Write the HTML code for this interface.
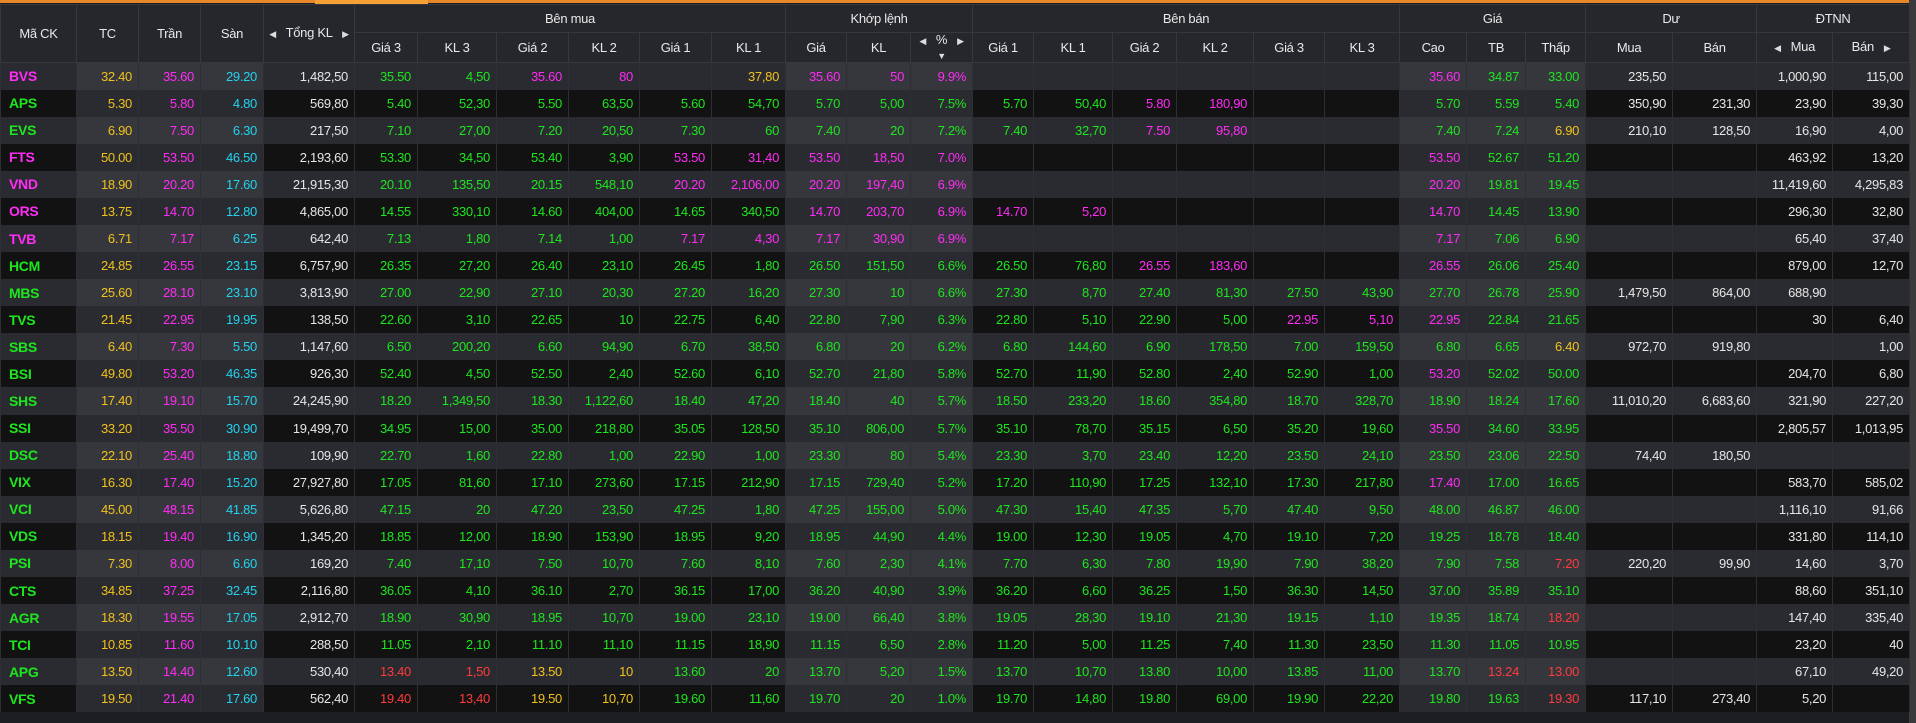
<!DOCTYPE html>
<html><head><meta charset="utf-8">
<style>
html,body{margin:0;padding:0;background:#1d1e22;width:1916px;height:723px;overflow:hidden;font-family:"Liberation Sans",Arial,sans-serif;}
.top{position:absolute;left:0;top:0;width:1909px;height:3px;background:#e8862a;}
.top2{position:absolute;left:315px;top:0;width:113px;height:5px;background:#f5a033;}
.sb{position:absolute;left:1909px;top:0;width:7px;height:723px;background:#3a3a3c;}
table{position:absolute;left:0;top:4px;border-collapse:collapse;table-layout:fixed;width:1909px;font-size:13px;letter-spacing:-0.3px;}
th{background:#26272c;color:#e8e8e8;font-weight:normal;border:1px solid #37383d;height:26px;padding:0;text-align:center;line-height:14px;}
tr.h1 th{height:27px;}
td{height:27.08px;padding:0 6px 0 0;text-align:right;border-left:1px solid #2e2f34;border-right:1px solid #2e2f34;color:#e6e6e6;white-space:nowrap;overflow:hidden;box-sizing:border-box;}
td.s{text-align:left;padding-left:8px;font-weight:bold;font-size:14px;}
tr.o td{background:#2a2b30;}
tr.o td.hl{background:#36373d;}
tr.e td{background:#121212;}
tr.e td.hl{background:#2a2b30;}
.ar{font-size:9px;color:#ddd;}
</style></head><body>
<div class="top"></div><div class="top2"></div><div class="sb"></div>
<table id="t">
<colgroup><col style="width:76px"><col style="width:62px"><col style="width:62px"><col style="width:63px"><col style="width:91px"><col style="width:63px"><col style="width:79px"><col style="width:72px"><col style="width:71px"><col style="width:72px"><col style="width:74px"><col style="width:61px"><col style="width:64px"><col style="width:62px"><col style="width:61px"><col style="width:79px"><col style="width:64px"><col style="width:77px"><col style="width:71px"><col style="width:75px"><col style="width:67px"><col style="width:59px"><col style="width:60px"><col style="width:87px"><col style="width:84px"><col style="width:76px"><col style="width:77px"></colgroup>
<thead>
<tr class="h1"><th rowspan="2">Mã CK</th><th rowspan="2">TC</th><th rowspan="2">Trần</th><th rowspan="2">Sàn</th><th rowspan="2"><span class="ar">◀</span>&nbsp;&nbsp; Tổng KL &nbsp;&nbsp;<span class="ar">▶</span></th><th colspan="6">Bên mua</th><th colspan="3">Khớp lệnh</th><th colspan="6">Bên bán</th><th colspan="3">Giá</th><th colspan="2">Dư</th><th colspan="2">ĐTNN</th></tr>
<tr><th>Giá 3</th><th>KL 3</th><th>Giá 2</th><th>KL 2</th><th>Giá 1</th><th>KL 1</th><th>Giá</th><th>KL</th><th><span class="ar">◀</span>&nbsp;&nbsp; % &nbsp;&nbsp;<span class="ar">▶</span><br><span class="ar" style="line-height:6px">▼</span></th><th>Giá 1</th><th>KL 1</th><th>Giá 2</th><th>KL 2</th><th>Giá 3</th><th>KL 3</th><th>Cao</th><th>TB</th><th>Thấp</th><th>Mua</th><th>Bán</th><th><span class="ar">◀</span>&nbsp;&nbsp; Mua</th><th>Bán &nbsp;&nbsp;<span class="ar">▶</span></th></tr>
</thead>
<tbody>
<tr><td>BVS</td><td>32.40</td><td>35.60</td><td>29.20</td><td>1,482,50</td><td>35.50</td><td>4,50</td><td>35.60</td><td>80</td><td></td><td>37,80</td><td>35.60</td><td>50</td><td>9.9%</td><td></td><td></td><td></td><td></td><td></td><td></td><td>35.60</td><td>34.87</td><td>33.00</td><td>235,50</td><td></td><td>1,000,90</td><td>115,00</td></tr>
<tr><td>APS</td><td>5.30</td><td>5.80</td><td>4.80</td><td>569,80</td><td>5.40</td><td>52,30</td><td>5.50</td><td>63,50</td><td>5.60</td><td>54,70</td><td>5.70</td><td>5,00</td><td>7.5%</td><td>5.70</td><td>50,40</td><td>5.80</td><td>180,90</td><td></td><td></td><td>5.70</td><td>5.59</td><td>5.40</td><td>350,90</td><td>231,30</td><td>23,90</td><td>39,30</td></tr>
<tr><td>EVS</td><td>6.90</td><td>7.50</td><td>6.30</td><td>217,50</td><td>7.10</td><td>27,00</td><td>7.20</td><td>20,50</td><td>7.30</td><td>60</td><td>7.40</td><td>20</td><td>7.2%</td><td>7.40</td><td>32,70</td><td>7.50</td><td>95,80</td><td></td><td></td><td>7.40</td><td>7.24</td><td>6.90</td><td>210,10</td><td>128,50</td><td>16,90</td><td>4,00</td></tr>
<tr><td>FTS</td><td>50.00</td><td>53.50</td><td>46.50</td><td>2,193,60</td><td>53.30</td><td>34,50</td><td>53.40</td><td>3,90</td><td>53.50</td><td>31,40</td><td>53.50</td><td>18,50</td><td>7.0%</td><td></td><td></td><td></td><td></td><td></td><td></td><td>53.50</td><td>52.67</td><td>51.20</td><td></td><td></td><td>463,92</td><td>13,20</td></tr>
<tr><td>VND</td><td>18.90</td><td>20.20</td><td>17.60</td><td>21,915,30</td><td>20.10</td><td>135,50</td><td>20.15</td><td>548,10</td><td>20.20</td><td>2,106,00</td><td>20.20</td><td>197,40</td><td>6.9%</td><td></td><td></td><td></td><td></td><td></td><td></td><td>20.20</td><td>19.81</td><td>19.45</td><td></td><td></td><td>11,419,60</td><td>4,295,83</td></tr>
<tr><td>ORS</td><td>13.75</td><td>14.70</td><td>12.80</td><td>4,865,00</td><td>14.55</td><td>330,10</td><td>14.60</td><td>404,00</td><td>14.65</td><td>340,50</td><td>14.70</td><td>203,70</td><td>6.9%</td><td>14.70</td><td>5,20</td><td></td><td></td><td></td><td></td><td>14.70</td><td>14.45</td><td>13.90</td><td></td><td></td><td>296,30</td><td>32,80</td></tr>
<tr><td>TVB</td><td>6.71</td><td>7.17</td><td>6.25</td><td>642,40</td><td>7.13</td><td>1,80</td><td>7.14</td><td>1,00</td><td>7.17</td><td>4,30</td><td>7.17</td><td>30,90</td><td>6.9%</td><td></td><td></td><td></td><td></td><td></td><td></td><td>7.17</td><td>7.06</td><td>6.90</td><td></td><td></td><td>65,40</td><td>37,40</td></tr>
<tr><td>HCM</td><td>24.85</td><td>26.55</td><td>23.15</td><td>6,757,90</td><td>26.35</td><td>27,20</td><td>26.40</td><td>23,10</td><td>26.45</td><td>1,80</td><td>26.50</td><td>151,50</td><td>6.6%</td><td>26.50</td><td>76,80</td><td>26.55</td><td>183,60</td><td></td><td></td><td>26.55</td><td>26.06</td><td>25.40</td><td></td><td></td><td>879,00</td><td>12,70</td></tr>
<tr><td>MBS</td><td>25.60</td><td>28.10</td><td>23.10</td><td>3,813,90</td><td>27.00</td><td>22,90</td><td>27.10</td><td>20,30</td><td>27.20</td><td>16,20</td><td>27.30</td><td>10</td><td>6.6%</td><td>27.30</td><td>8,70</td><td>27.40</td><td>81,30</td><td>27.50</td><td>43,90</td><td>27.70</td><td>26.78</td><td>25.90</td><td>1,479,50</td><td>864,00</td><td>688,90</td><td></td></tr>
<tr><td>TVS</td><td>21.45</td><td>22.95</td><td>19.95</td><td>138,50</td><td>22.60</td><td>3,10</td><td>22.65</td><td>10</td><td>22.75</td><td>6,40</td><td>22.80</td><td>7,90</td><td>6.3%</td><td>22.80</td><td>5,10</td><td>22.90</td><td>5,00</td><td>22.95</td><td>5,10</td><td>22.95</td><td>22.84</td><td>21.65</td><td></td><td></td><td>30</td><td>6,40</td></tr>
<tr><td>SBS</td><td>6.40</td><td>7.30</td><td>5.50</td><td>1,147,60</td><td>6.50</td><td>200,20</td><td>6.60</td><td>94,90</td><td>6.70</td><td>38,50</td><td>6.80</td><td>20</td><td>6.2%</td><td>6.80</td><td>144,60</td><td>6.90</td><td>178,50</td><td>7.00</td><td>159,50</td><td>6.80</td><td>6.65</td><td>6.40</td><td>972,70</td><td>919,80</td><td></td><td>1,00</td></tr>
<tr><td>BSI</td><td>49.80</td><td>53.20</td><td>46.35</td><td>926,30</td><td>52.40</td><td>4,50</td><td>52.50</td><td>2,40</td><td>52.60</td><td>6,10</td><td>52.70</td><td>21,80</td><td>5.8%</td><td>52.70</td><td>11,90</td><td>52.80</td><td>2,40</td><td>52.90</td><td>1,00</td><td>53.20</td><td>52.02</td><td>50.00</td><td></td><td></td><td>204,70</td><td>6,80</td></tr>
<tr><td>SHS</td><td>17.40</td><td>19.10</td><td>15.70</td><td>24,245,90</td><td>18.20</td><td>1,349,50</td><td>18.30</td><td>1,122,60</td><td>18.40</td><td>47,20</td><td>18.40</td><td>40</td><td>5.7%</td><td>18.50</td><td>233,20</td><td>18.60</td><td>354,80</td><td>18.70</td><td>328,70</td><td>18.90</td><td>18.24</td><td>17.60</td><td>11,010,20</td><td>6,683,60</td><td>321,90</td><td>227,20</td></tr>
<tr><td>SSI</td><td>33.20</td><td>35.50</td><td>30.90</td><td>19,499,70</td><td>34.95</td><td>15,00</td><td>35.00</td><td>218,80</td><td>35.05</td><td>128,50</td><td>35.10</td><td>806,00</td><td>5.7%</td><td>35.10</td><td>78,70</td><td>35.15</td><td>6,50</td><td>35.20</td><td>19,60</td><td>35.50</td><td>34.60</td><td>33.95</td><td></td><td></td><td>2,805,57</td><td>1,013,95</td></tr>
<tr><td>DSC</td><td>22.10</td><td>25.40</td><td>18.80</td><td>109,90</td><td>22.70</td><td>1,60</td><td>22.80</td><td>1,00</td><td>22.90</td><td>1,00</td><td>23.30</td><td>80</td><td>5.4%</td><td>23.30</td><td>3,70</td><td>23.40</td><td>12,20</td><td>23.50</td><td>24,10</td><td>23.50</td><td>23.06</td><td>22.50</td><td>74,40</td><td>180,50</td><td></td><td></td></tr>
<tr><td>VIX</td><td>16.30</td><td>17.40</td><td>15.20</td><td>27,927,80</td><td>17.05</td><td>81,60</td><td>17.10</td><td>273,60</td><td>17.15</td><td>212,90</td><td>17.15</td><td>729,40</td><td>5.2%</td><td>17.20</td><td>110,90</td><td>17.25</td><td>132,10</td><td>17.30</td><td>217,80</td><td>17.40</td><td>17.00</td><td>16.65</td><td></td><td></td><td>583,70</td><td>585,02</td></tr>
<tr><td>VCI</td><td>45.00</td><td>48.15</td><td>41.85</td><td>5,626,80</td><td>47.15</td><td>20</td><td>47.20</td><td>23,50</td><td>47.25</td><td>1,80</td><td>47.25</td><td>155,00</td><td>5.0%</td><td>47.30</td><td>15,40</td><td>47.35</td><td>5,70</td><td>47.40</td><td>9,50</td><td>48.00</td><td>46.87</td><td>46.00</td><td></td><td></td><td>1,116,10</td><td>91,66</td></tr>
<tr><td>VDS</td><td>18.15</td><td>19.40</td><td>16.90</td><td>1,345,20</td><td>18.85</td><td>12,00</td><td>18.90</td><td>153,90</td><td>18.95</td><td>9,20</td><td>18.95</td><td>44,90</td><td>4.4%</td><td>19.00</td><td>12,30</td><td>19.05</td><td>4,70</td><td>19.10</td><td>7,20</td><td>19.25</td><td>18.78</td><td>18.40</td><td></td><td></td><td>331,80</td><td>114,10</td></tr>
<tr><td>PSI</td><td>7.30</td><td>8.00</td><td>6.60</td><td>169,20</td><td>7.40</td><td>17,10</td><td>7.50</td><td>10,70</td><td>7.60</td><td>8,10</td><td>7.60</td><td>2,30</td><td>4.1%</td><td>7.70</td><td>6,30</td><td>7.80</td><td>19,90</td><td>7.90</td><td>38,20</td><td>7.90</td><td>7.58</td><td>7.20</td><td>220,20</td><td>99,90</td><td>14,60</td><td>3,70</td></tr>
<tr><td>CTS</td><td>34.85</td><td>37.25</td><td>32.45</td><td>2,116,80</td><td>36.05</td><td>4,10</td><td>36.10</td><td>2,70</td><td>36.15</td><td>17,00</td><td>36.20</td><td>40,90</td><td>3.9%</td><td>36.20</td><td>6,60</td><td>36.25</td><td>1,50</td><td>36.30</td><td>14,50</td><td>37.00</td><td>35.89</td><td>35.10</td><td></td><td></td><td>88,60</td><td>351,10</td></tr>
<tr><td>AGR</td><td>18.30</td><td>19.55</td><td>17.05</td><td>2,912,70</td><td>18.90</td><td>30,90</td><td>18.95</td><td>10,70</td><td>19.00</td><td>23,10</td><td>19.00</td><td>66,40</td><td>3.8%</td><td>19.05</td><td>28,30</td><td>19.10</td><td>21,30</td><td>19.15</td><td>1,10</td><td>19.35</td><td>18.74</td><td>18.20</td><td></td><td></td><td>147,40</td><td>335,40</td></tr>
<tr><td>TCI</td><td>10.85</td><td>11.60</td><td>10.10</td><td>288,50</td><td>11.05</td><td>2,10</td><td>11.10</td><td>11,10</td><td>11.15</td><td>18,90</td><td>11.15</td><td>6,50</td><td>2.8%</td><td>11.20</td><td>5,00</td><td>11.25</td><td>7,40</td><td>11.30</td><td>23,50</td><td>11.30</td><td>11.05</td><td>10.95</td><td></td><td></td><td>23,20</td><td>40</td></tr>
<tr><td>APG</td><td>13.50</td><td>14.40</td><td>12.60</td><td>530,40</td><td>13.40</td><td>1,50</td><td>13.50</td><td>10</td><td>13.60</td><td>20</td><td>13.70</td><td>5,20</td><td>1.5%</td><td>13.70</td><td>10,70</td><td>13.80</td><td>10,00</td><td>13.85</td><td>11,00</td><td>13.70</td><td>13.24</td><td>13.00</td><td></td><td></td><td>67,10</td><td>49,20</td></tr>
<tr><td>VFS</td><td>19.50</td><td>21.40</td><td>17.60</td><td>562,40</td><td>19.40</td><td>13,40</td><td>19.50</td><td>10,70</td><td>19.60</td><td>11,60</td><td>19.70</td><td>20</td><td>1.0%</td><td>19.70</td><td>14,80</td><td>19.80</td><td>69,00</td><td>19.90</td><td>22,20</td><td>19.80</td><td>19.63</td><td>19.30</td><td>117,10</td><td>273,40</td><td>5,20</td><td></td></tr>
</tbody></table>
<script>
(function(){
var Y='#f2c21b',M='#ff2cf5',C='#22d3ee',G='#1ee61e',R='#ff3b3b';
var rows=document.querySelectorAll('#t tbody tr');
var hl=[1,2,3,11,12,13,20,21,22];
var prices=[5,7,9,11,14,16,18,20,21,22];
rows.forEach(function(tr,i){
 tr.className=i%2?'e':'o';
 var td=tr.children;
 var ref=parseFloat(td[1].textContent),ce=parseFloat(td[2].textContent),fl=parseFloat(td[3].textContent);
 function col(v){if(isNaN(v))return Y;if(v===ce)return M;if(v===fl)return C;if(v===ref)return Y;return v>ref?G:R;}
 hl.forEach(function(k){td[k].classList.add('hl');});
 td[0].classList.add('s');
 td[1].style.color=Y;td[2].style.color=M;td[3].style.color=C;
 prices.forEach(function(k){td[k].style.color=col(parseFloat(td[k].textContent));});
 [6,8,10,12,15,17,19].forEach(function(k){td[k].style.color=td[k-1].style.color;});
 td[13].style.color=td[11].style.color;
 td[0].style.color=td[11].style.color;
});
})();
</script>
</body></html>
